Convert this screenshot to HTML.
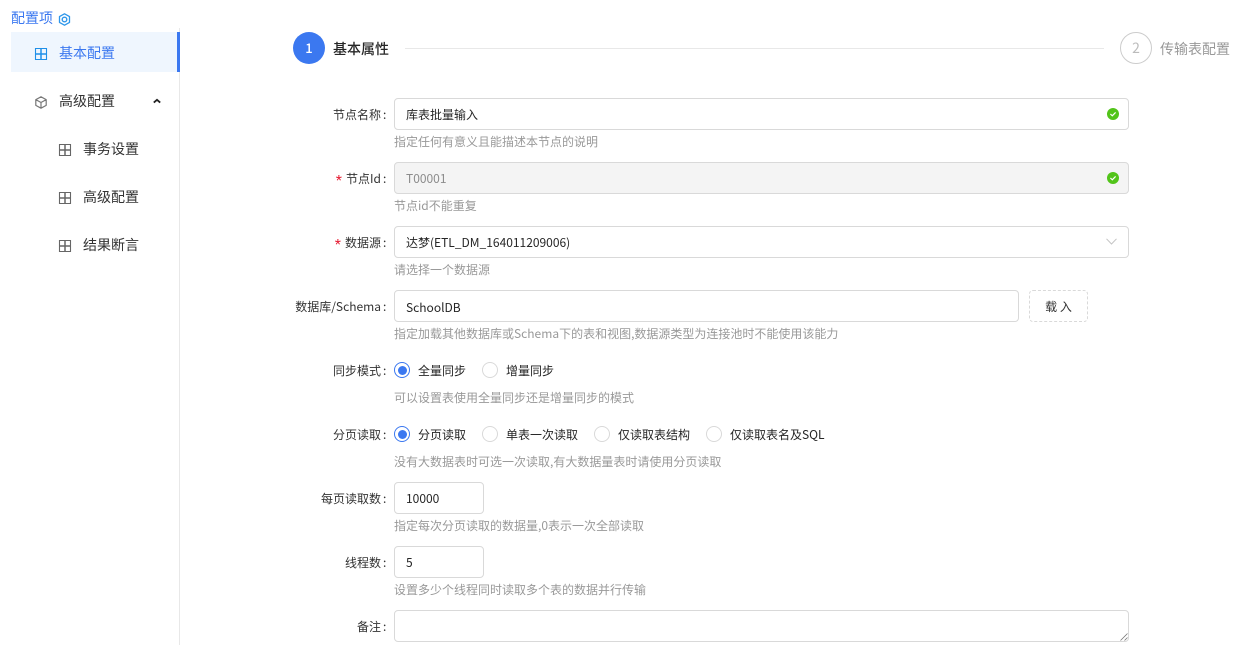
<!DOCTYPE html>
<html lang="zh"><head><meta charset="utf-8"><style>
html,body{margin:0;padding:0;background:#fff;width:1238px;height:645px;overflow:hidden}
body{position:relative;font-family:"Noto Sans CJK SC","Liberation Sans",sans-serif;font-size:12px;color:#262626}
.t{position:absolute;white-space:nowrap;line-height:20px;margin-top:1px}
.l{position:absolute;right:857px;white-space:nowrap;line-height:20px;color:#333;margin-top:1px}
.l:after{content:":";position:absolute;left:100%;margin-left:2px;top:0}
.h{position:absolute;left:394px;white-space:nowrap;line-height:20px;color:#999;margin-top:1px}
.i{position:absolute;box-sizing:border-box;height:32px;left:394px;width:735px;border:1px solid #d9d9d9;border-radius:4px;background:#fff;padding-left:11px;line-height:32px;color:#262626}
.m{position:absolute;font-size:14px;line-height:20px;white-space:nowrap;color:#333}
.r{position:absolute;box-sizing:border-box;width:16px;height:16px;border:1px solid #d9d9d9;border-radius:50%;background:#fff}
.r.on{border-color:#3b78f0}
.r.on:after{content:"";position:absolute;left:2.5px;top:2.5px;width:9px;height:9px;border-radius:50%;background:#3b78f0}
svg{position:absolute;overflow:visible}
.s{color:#e5162d;margin-right:4px;font-family:"Liberation Sans",sans-serif;font-size:16px;line-height:0;position:relative;top:3px}
</style></head><body>
<div class="m" style="left:11px;top:8px;color:#3b78f0">配置项</div>
<svg style="left:58px;top:13px" width="13" height="13" viewBox="0 0 13 13" fill="none" stroke="#2d96ea"><path d="M6.500.8 11.500 3.600V9.400L6.500 12.200 1.500 9.400V3.600Z" stroke-width="1.300" stroke-linejoin="round"/><circle cx="6.500" cy="6.500" r="2.300" stroke-width="1.400"/></svg>

<div style="position:absolute;left:179px;top:28px;width:1px;height:617px;background:#e8e8e8"></div>
<div style="position:absolute;left:11px;top:32px;width:169px;height:40px;background:#eff6fe"></div>
<div style="position:absolute;left:177px;top:32px;width:3px;height:40px;background:#3b78f0"></div>

<svg style="left:35px;top:48px" width="12" height="12" viewBox="0 0 12 12" fill="none" stroke="#1e8fe8" stroke-width="1.100"><path d="M.5.5H11.500V11.500H.5Z"/><path d="M6 .5V11.500M.5 6H11.500" stroke-width="1.500"/></svg>
<div class="m" style="left:59px;top:43px;color:#3b78f0">基本配置</div>
<svg style="left:35px;top:96px" width="12" height="13" viewBox="0 0 12 13" fill="none" stroke="#777" stroke-width="1.200" stroke-linejoin="round"><path d="M6 .8 11.200 3.600V9.400L6 12.200.8 9.400V3.600ZM.8 3.600 6 6.500 11.200 3.600M6 6.500V12.200"/></svg>
<div class="m" style="left:59px;top:91px">高级配置</div>
<svg style="left:153px;top:98px" width="8" height="6" viewBox="0 0 8 6" fill="none" stroke="#222" stroke-width="1.800"><path d="M.8 4.600 4 1.800 7.200 4.600"/></svg>
<svg style="left:59px;top:144px" width="12" height="12" viewBox="0 0 12 12" fill="none" stroke="#666" stroke-width="1.100"><path d="M.5.5H11.500V11.500H.5Z"/><path d="M6 .5V11.500M.5 6H11.500" stroke-width="1.500"/></svg>
<div class="m" style="left:83px;top:139px">事务设置</div>
<svg style="left:59px;top:192px" width="12" height="12" viewBox="0 0 12 12" fill="none" stroke="#666" stroke-width="1.100"><path d="M.5.5H11.500V11.500H.5Z"/><path d="M6 .5V11.500M.5 6H11.500" stroke-width="1.500"/></svg>
<div class="m" style="left:83px;top:187px">高级配置</div>
<svg style="left:59px;top:240px" width="12" height="12" viewBox="0 0 12 12" fill="none" stroke="#666" stroke-width="1.100"><path d="M.5.5H11.500V11.500H.5Z"/><path d="M6 .5V11.500M.5 6H11.500" stroke-width="1.500"/></svg>
<div class="m" style="left:83px;top:235px">结果断言</div>

<div style="position:absolute;left:293px;top:32px;width:32px;height:32px;border-radius:50%;background:#3b78f0;color:#fff;text-align:center;line-height:32px;font-size:13px;font-weight:500">1</div>
<div class="m" style="left:333px;top:39px;font-weight:500;color:#262626">基本属性</div>
<div style="position:absolute;left:405px;top:48px;width:699px;height:1px;background:#e8e8e8"></div>
<div style="position:absolute;box-sizing:border-box;left:1120px;top:32px;width:32px;height:32px;border-radius:50%;border:1px solid #ccc;color:#bbb;text-align:center;line-height:30px;font-size:14px">2</div>
<div class="m" style="left:1160px;top:39px;color:#999">传输表配置</div>

<div class="l" style="top:104px">节点名称</div>
<div class="i" style="top:98px">库表批量输入</div>
<svg style="left:1107px;top:108px" width="12" height="12" viewBox="0 0 12 12"><circle cx="6" cy="6" r="6" fill="#52c41a"/><path d="M3.400 6 5.300 7.800 8.600 4.400" fill="none" stroke="#fff" stroke-width="1.200"/></svg>
<div class="h" style="top:131px">指定任何有意义且能描述本节点的说明</div>

<div class="l" style="top:168px"><span class="s">*</span>节点Id</div>
<div class="i" style="top:162px;background:#f4f4f4;color:#8c8c8c">T00001</div>
<svg style="left:1107px;top:172px" width="12" height="12" viewBox="0 0 12 12"><circle cx="6" cy="6" r="6" fill="#52c41a"/><path d="M3.400 6 5.300 7.800 8.600 4.400" fill="none" stroke="#fff" stroke-width="1.200"/></svg>
<div class="h" style="top:195px">节点id不能重复</div>

<div class="l" style="top:232px"><span class="s">*</span>数据源</div>
<div class="i" style="top:226px">达梦(ETL_DM_164011209006)</div>
<svg style="left:1106px;top:238px" width="11" height="7" viewBox="0 0 11 7" fill="none" stroke="#c4c4c4"><path d="M.5.8 5.500 6 10.500.8"/></svg>
<div class="h" style="top:259px">请选择一个数据源</div>

<div class="l" style="top:296px">数据库/Schema</div>
<div class="i" style="top:290px;width:625px;line-height:34px">SchoolDB</div>
<div style="position:absolute;box-sizing:border-box;left:1029px;top:290px;width:59px;height:32px;border:1px dashed #d9d9d9;border-radius:4px;text-align:center;line-height:32px;color:#333">载 入</div>
<div class="h" style="top:323px">指定加载其他数据库或Schema下的表和视图,数据源类型为连接池时不能使用该能力</div>

<div class="l" style="top:360px">同步模式</div>
<div class="r on" style="left:394px;top:362px"></div><div class="t" style="left:418px;top:360px">全量同步</div>
<div class="r" style="left:482px;top:362px"></div><div class="t" style="left:506px;top:360px">增量同步</div>
<div class="h" style="top:387px">可以设置表使用全量同步还是增量同步的模式</div>

<div class="l" style="top:424px">分页读取</div>
<div class="r on" style="left:394px;top:426px"></div><div class="t" style="left:418px;top:424px">分页读取</div>
<div class="r" style="left:482px;top:426px"></div><div class="t" style="left:506px;top:424px">单表一次读取</div>
<div class="r" style="left:594px;top:426px"></div><div class="t" style="left:618px;top:424px">仅读取表结构</div>
<div class="r" style="left:706px;top:426px"></div><div class="t" style="left:730px;top:424px">仅读取表名及SQL</div>
<div class="h" style="top:451px">没有大数据表时可选一次读取,有大数据量表时请使用分页读取</div>

<div class="l" style="top:488px">每页读取数</div>
<div class="i" style="top:482px;width:90px">10000</div>
<div class="h" style="top:515px">指定每次分页读取的数据量,0表示一次全部读取</div>

<div class="l" style="top:552px">线程数</div>
<div class="i" style="top:546px;width:90px">5</div>
<div class="h" style="top:579px">设置多少个线程同时读取多个表的数据并行传输</div>

<div class="l" style="top:616px">备注</div>
<div class="i" style="top:610px"></div>
<svg style="left:1120px;top:633px" width="8" height="8" viewBox="0 0 8 8" fill="none" stroke="#777" stroke-width=".8"><path d="M.5 7.500 7.500.5M4.500 7.500 7.500 4.500"/></svg>
</body></html>
